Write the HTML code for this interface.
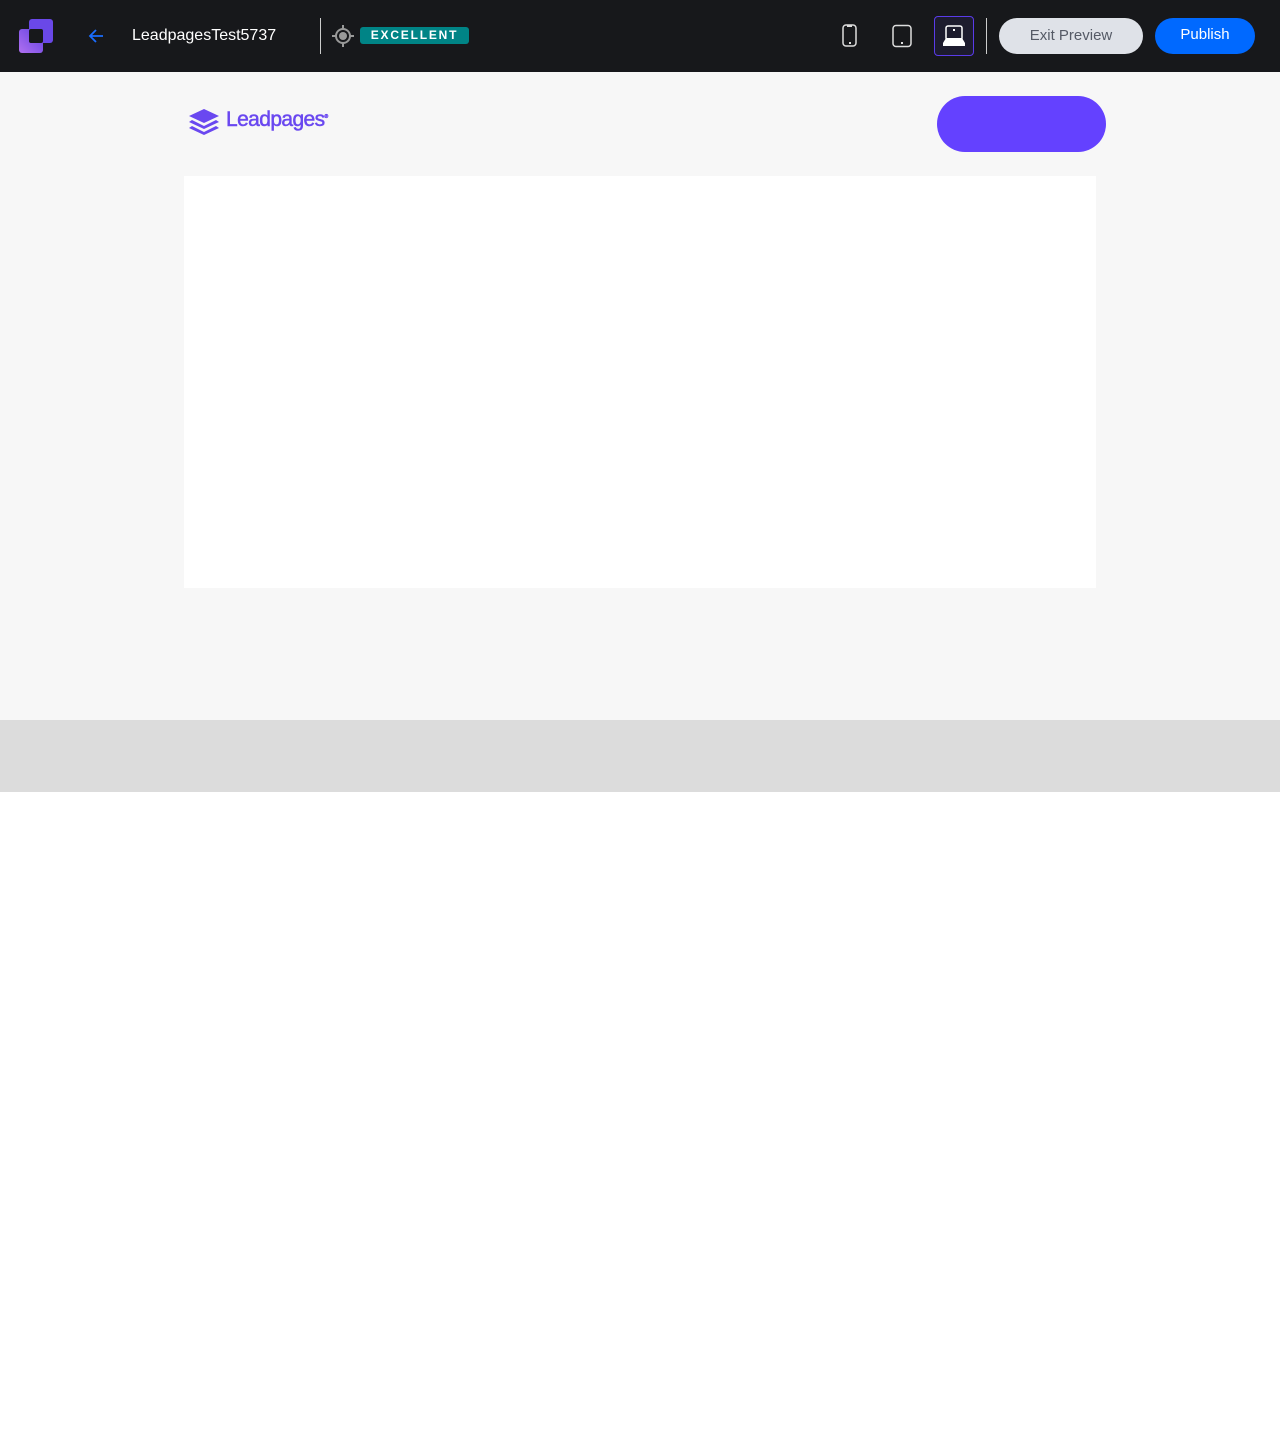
<!DOCTYPE html>
<html><head><meta charset="utf-8"><style>
*{margin:0;padding:0;box-sizing:border-box}
body{width:1280px;height:1440px;background:#fff;font-family:"Liberation Sans",sans-serif;position:relative;overflow:hidden}
.top{position:absolute;left:0;top:0;width:1280px;height:72px;background:#17181b}
.abs{position:absolute}
</style></head><body>
<div class="top">
 <svg class="abs" style="left:18px;top:18px" width="36" height="36" viewBox="0 0 36 36">
  <defs><linearGradient id="g" x1="0" y1="1" x2="1" y2="0"><stop offset="0" stop-color="#b070f0"/><stop offset="1" stop-color="#6040e0"/></linearGradient></defs>
  <rect x="11" y="1" width="24" height="24" rx="3" fill="#6a48e8"/>
  <rect x="1" y="11" width="24" height="24" rx="3" fill="url(#g)"/>
  <rect x="11" y="11" width="14" height="14" rx="2" fill="#17181b"/>
 </svg>
 <svg class="abs" style="left:88px;top:28px" width="16" height="16" viewBox="0 0 16 16"><path d="M15 8H2M8 2L2 8l6 6" stroke="#1a6dff" stroke-width="1.8" fill="none"/></svg>
 <div class="abs" style="left:132px;top:27px;color:#fff;font-size:16px">LeadpagesTest5737</div>
 <div class="abs" style="left:320px;top:18px;width:1px;height:36px;background:#ccc"></div>
 <svg class="abs" style="left:332px;top:25px" width="22" height="22" viewBox="0 0 22 22"><circle cx="11" cy="11" r="7" stroke="#999" stroke-width="2" fill="none"/><circle cx="11" cy="11" r="4" fill="#999"/><path d="M11 0v4M11 18v4M0 11h4M18 11h4" stroke="#999" stroke-width="2"/></svg>
 <div class="abs" style="left:360px;top:27px;width:109px;height:17px;background:#008486;border-radius:3px;color:#fff;font-size:12px;font-weight:bold;letter-spacing:1.8px;text-align:center;line-height:17px">EXCELLENT</div>
 <svg class="abs" style="left:841px;top:24px" width="18" height="24" viewBox="0 0 18 24"><rect x="2" y="1" width="13" height="21" rx="3" stroke="#ddd" stroke-width="1.5" fill="none"/><rect x="6" y="1" width="5" height="2" fill="#ddd"/><rect x="8" y="18" width="2" height="2" fill="#ddd"/></svg>
 <svg class="abs" style="left:891px;top:24px" width="22" height="24" viewBox="0 0 22 24"><rect x="2" y="1.5" width="18" height="21" rx="3" stroke="#ddd" stroke-width="1.5" fill="none"/><rect x="10" y="18" width="2" height="2" fill="#ddd"/></svg>
 <div class="abs" style="left:934px;top:16px;width:40px;height:40px;border:1.5px solid #5a3bea;border-radius:4px;background:#1d1c2e"></div>
 <svg class="abs" style="left:942px;top:25px" width="24" height="22" viewBox="0 0 24 22"><rect x="4" y="1" width="16" height="14" rx="2" stroke="#fff" stroke-width="1.5" fill="none"/><rect x="11" y="4" width="2" height="2" fill="#fff"/><path d="M4 13h16l3 5v3H1v-3z" fill="#fff"/></svg>
 <div class="abs" style="left:986px;top:18px;width:1px;height:36px;background:#ccc"></div>
 <div class="abs" style="left:999px;top:18px;width:144px;height:36px;border-radius:18px;background:#dfe2e8;color:#555a66;font-size:15px;text-align:center;line-height:35px">Exit Preview</div>
 <div class="abs" style="left:1155px;top:18px;width:100px;height:36px;border-radius:18px;background:#0069ff;color:#fff;font-size:15px;text-align:center;line-height:34px">Publish</div>
</div>
<div class="abs" style="left:0;top:72px;width:1280px;height:648px;background:#f7f7f7"></div>
<svg class="abs" style="left:187px;top:107px" width="34" height="28" viewBox="0 0 34 28"><path d="M17 2L32 9 17 16 2 9z" fill="#6a48f0"/><path d="M5 13l12 6 12-6 3 2-15 7-15-7z" fill="#6a48f0"/><path d="M5 19l12 6 12-6 3 2-15 7-15-7z" fill="#6a48f0"/></svg>
<div class="abs" style="left:226px;top:108px;color:#6a48f0;font-size:21px;letter-spacing:-0.6px;-webkit-text-stroke:0.5px #6a48f0">Leadpages<span style="font-size:5px;vertical-align:8px">®</span></div>
<div class="abs" style="left:937px;top:96px;width:169px;height:56px;border-radius:28px;background:#6441ff"></div>
<div class="abs" style="left:184px;top:176px;width:912px;height:412px;background:#fff"></div>
<div class="abs" style="left:0;top:720px;width:1280px;height:72px;background:#dcdcdc"></div>
</body></html>
